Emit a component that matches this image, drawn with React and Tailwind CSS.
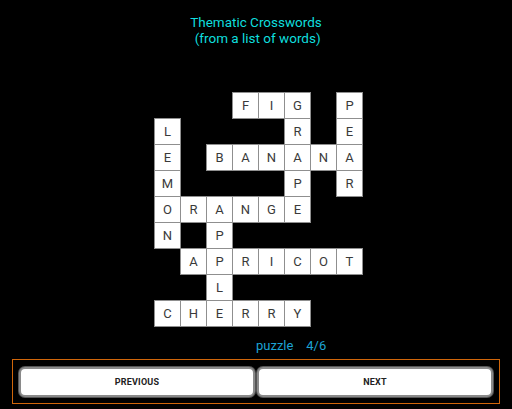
import React from 'react';

const rows = [
  '   FIG P',
  'L    R E',
  'E BANANA',
  'M    P R',
  'ORANGE  ',
  'N P     ',
  ' APRICOT',
  '  L     ',
  'CHERRY  ',
];

const Cell = ({ ch }) => {
  if (ch === ' ') return <div className="w-[26px] h-[26px]" />;
  return (
    <div className="w-[27px] h-[27px] bg-white border border-[#8f8f8f] flex items-center justify-center text-[13px] text-[#3a3a3a]">
      {ch}
    </div>
  );
};

const App = () => {
  return (
    <div
      className="w-[512px] h-[409px] bg-black flex flex-col overflow-hidden"
      style={{ fontFamily: 'Roboto, "Noto Sans", sans-serif' }}
    >
      {/* Title */}
      <div className="pt-[14px] flex flex-col items-center text-[13.5px] leading-[16px] text-[#0fdede]">
        <p>Thematic Crosswords</p>
        <p className="whitespace-pre"> (from a list of words)</p>
      </div>

      {/* Board */}
      <div className="mt-[46px] ml-[154px] grid grid-cols-[repeat(8,26px)] grid-rows-[repeat(9,26px)]">
        {rows.map((row, r) =>
          row.split('').map((ch, c) => <Cell key={r + '-' + c} ch={ch} />)
        )}
      </div>

      {/* Puzzle counter */}
      <div className="mt-[12px] ml-[256px] text-[13px] leading-[16px] text-[#1ca3d3] whitespace-pre">
        puzzle    4/6
      </div>

      {/* Buttons */}
      <div className="mt-[5px] mx-[12px] h-[45px] border-[1.5px] border-[#d0660a] flex gap-[2px] px-[6px] pt-[6.5px]">
        <button className="flex-1 h-[30px] bg-white rounded-[6px] border-2 border-[#8a8a8a] shadow-[0_0_0_1px_#555] text-[9px] font-bold text-[#222] tracking-[0.2px] pt-[2px]">
          PREVIOUS
        </button>
        <button className="flex-1 h-[30px] bg-white rounded-[6px] border-2 border-[#8a8a8a] shadow-[0_0_0_1px_#555] text-[9px] font-bold text-[#222] tracking-[0.2px] pt-[2px]">
          NEXT
        </button>
      </div>
    </div>
  );
};

export default App;
